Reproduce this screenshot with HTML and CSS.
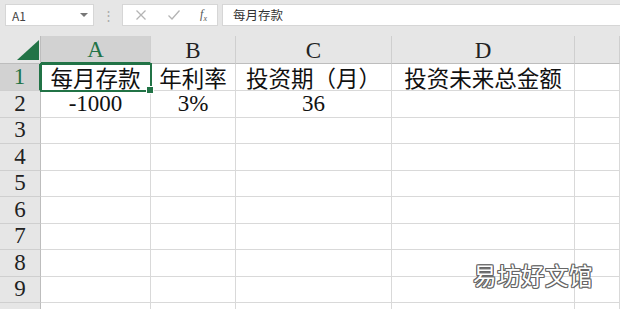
FILE: index.html
```html
<!DOCTYPE html>
<html lang="zh-CN">
<head>
<meta charset="UTF-8">
<meta name="viewport" content="width=device-width, initial-scale=1.0">
<title>每月存款</title>
<link rel="stylesheet" href="styles.css">
</head>
<body>
<div class="app">
    <div class="toolbar">
        <div class="namebox">
            <span>A1</span>
            <span class="caret"></span>
        </div>
        <div class="dots">⋮</div>
        <div class="fbuttons">
            <svg width="12" height="12" viewBox="0 0 12 12"><path d="M1.5 1.5 L10.5 10.5 M10.5 1.5 L1.5 10.5" stroke="#b4b4b4" stroke-width="1.3" fill="none"/></svg>
            <svg width="14" height="12" viewBox="0 0 14 12"><path d="M1.5 6.5 L5 10 L12.5 1.5" stroke="#b4b4b4" stroke-width="1.3" fill="none"/></svg>
            <span class="fx">f<sub>x</sub></span>
        </div>
        <div class="formula">每月存款</div>
    </div>

    <div class="sheet">
        <div class="corner"><span class="tri"></span></div>
        <div class="colhead sel">A</div>
        <div class="colhead">B</div>
        <div class="colhead">C</div>
        <div class="colhead">D</div>
        <div class="colhead"></div>

        <div class="rowhead sel">1</div>
        <div class="cell active">每月存款</div>
        <div class="cell">年利率</div>
        <div class="cell">投资期（月）</div>
        <div class="cell">投资未来总金额</div>
        <div class="cell"></div>

        <div class="rowhead">2</div>
        <div class="cell num">-1000</div>
        <div class="cell num">3%</div>
        <div class="cell num">36</div>
        <div class="cell"></div>
        <div class="cell"></div>

        <div class="rowhead">3</div>
        <div class="cell"></div><div class="cell"></div><div class="cell"></div><div class="cell"></div><div class="cell"></div>
        <div class="rowhead">4</div>
        <div class="cell"></div><div class="cell"></div><div class="cell"></div><div class="cell"></div><div class="cell"></div>
        <div class="rowhead">5</div>
        <div class="cell"></div><div class="cell"></div><div class="cell"></div><div class="cell"></div><div class="cell"></div>
        <div class="rowhead">6</div>
        <div class="cell"></div><div class="cell"></div><div class="cell"></div><div class="cell"></div><div class="cell"></div>
        <div class="rowhead">7</div>
        <div class="cell"></div><div class="cell"></div><div class="cell"></div><div class="cell"></div><div class="cell"></div>
        <div class="rowhead">8</div>
        <div class="cell"></div><div class="cell"></div><div class="cell"></div><div class="cell"></div><div class="cell"></div>
        <div class="rowhead">9</div>
        <div class="cell"></div><div class="cell"></div><div class="cell"></div><div class="cell"></div><div class="cell"></div>
        <div class="rowhead"></div>
        <div class="cell"></div><div class="cell"></div><div class="cell"></div><div class="cell"></div><div class="cell"></div>
    </div>

    <div class="watermark">易坊好文馆</div>
</div>
</body>
</html>
```

FILE: styles.css
```css
* {
    box-sizing: border-box;
}
body {
    margin: 0;
    background: #fff;
    font-family: "Liberation Serif", "Noto Sans CJK SC", serif;
}
.app {
    position: relative;
    width: 620px;
    height: 309px;
    overflow: hidden;
}
.toolbar {
    height: 36px;
    background: #e6e6e6;
    display: flex;
    align-items: flex-start;
    padding: 4px 0 0 5px;
    font-family: "Noto Sans CJK SC", sans-serif;
}
.namebox {
    width: 89px;
    height: 22px;
    background: #fff;
    border: 1px solid #d6d6d6;
    display: flex;
    align-items: center;
    justify-content: space-between;
    padding: 0 5px 0 6px;
    font-size: 12px;
    color: #444;
}
.caret {
    width: 0;
    height: 0;
    border-left: 4px solid transparent;
    border-right: 4px solid transparent;
    border-top: 4px solid #777;
}
.dots {
    width: 28px;
    text-align: center;
    color: #aaa;
    font-size: 13px;
    line-height: 22px;
}
.fbuttons {
    width: 96px;
    height: 22px;
    background: #fff;
    border: 1px solid #d6d6d6;
    display: flex;
    align-items: center;
    justify-content: space-between;
    padding: 0 10px 0 12px;
}
.fx {
    font-family: "Liberation Serif", serif;
    font-style: italic;
    font-size: 12px;
    color: #555;
}
.fx sub {
    font-size: 8px;
}
.formula {
    flex: 1;
    height: 22px;
    margin-left: 4px;
    background: #fff;
    border: 1px solid #d6d6d6;
    border-right: 0;
    padding-left: 10px;
    font-size: 12.5px;
    line-height: 20px;
    color: #333;
}
.sheet {
    display: grid;
    grid-template-columns: 41px 110px 85px 156px 183px 45px;
    grid-template-rows: 28px 27px repeat(9, 26.5px);
}
.corner {
    background: #e6e6e6;
    border-right: 1px solid #bdbdbd;
    border-bottom: 1px solid #bdbdbd;
    position: relative;
}
.tri {
    position: absolute;
    left: 17px;
    top: 4px;
    width: 0;
    height: 0;
    border-left: 22px solid transparent;
    border-bottom: 20px solid #217346;
}
.colhead {
    background: #e6e6e6;
    border-right: 1px solid #cfcfcf;
    border-bottom: 1px solid #bdbdbd;
    display: flex;
    align-items: center;
    justify-content: center;
    font-size: 23px;
    color: #222;
    padding-top: 2px;
}
.rowhead {
    background: #e6e6e6;
    border-right: 1px solid #bdbdbd;
    border-bottom: 1px solid #cfcfcf;
    display: flex;
    align-items: center;
    justify-content: center;
    font-size: 23px;
    color: #222;
}
.colhead.sel {
    background: #d2d2d2;
    color: #217346;
    border-bottom: 2px solid #217346;
}
.rowhead.sel {
    background: #d2d2d2;
    color: #217346;
    border-right: 2px solid #217346;
}
.cell {
    border-right: 1px solid #d9d9d9;
    border-bottom: 1px solid #d9d9d9;
    display: flex;
    align-items: center;
    justify-content: center;
    font-family: "Noto Sans CJK SC", sans-serif;
    font-size: 22.5px;
    color: #111;
    white-space: nowrap;
}
.cell.num {
    font-family: "Liberation Serif", serif;
    font-size: 23px;
}
.cell.active {
    position: relative;
    z-index: 1;
    outline: 2px solid #217346;
    outline-offset: -1px;
}
.cell.active::after {
    content: "";
    position: absolute;
    right: -4px;
    bottom: -4px;
    width: 6px;
    height: 6px;
    background: #217346;
    border: 1px solid #fff;
}
.watermark {
    position: absolute;
    left: 473px;
    top: 258px;
    font-family: "Noto Sans CJK SC", sans-serif;
    font-size: 23.5px;
    color: #fff;
    letter-spacing: 0.5px;
    text-shadow:
        1px 0 0 #666, -1px 0 0 #666, 0 1px 0 #666, 0 -1px 0 #666,
        1px 1px 0 #666, -1px -1px 0 #666, 1px -1px 0 #666, -1px 1px 0 #666;
}
```
